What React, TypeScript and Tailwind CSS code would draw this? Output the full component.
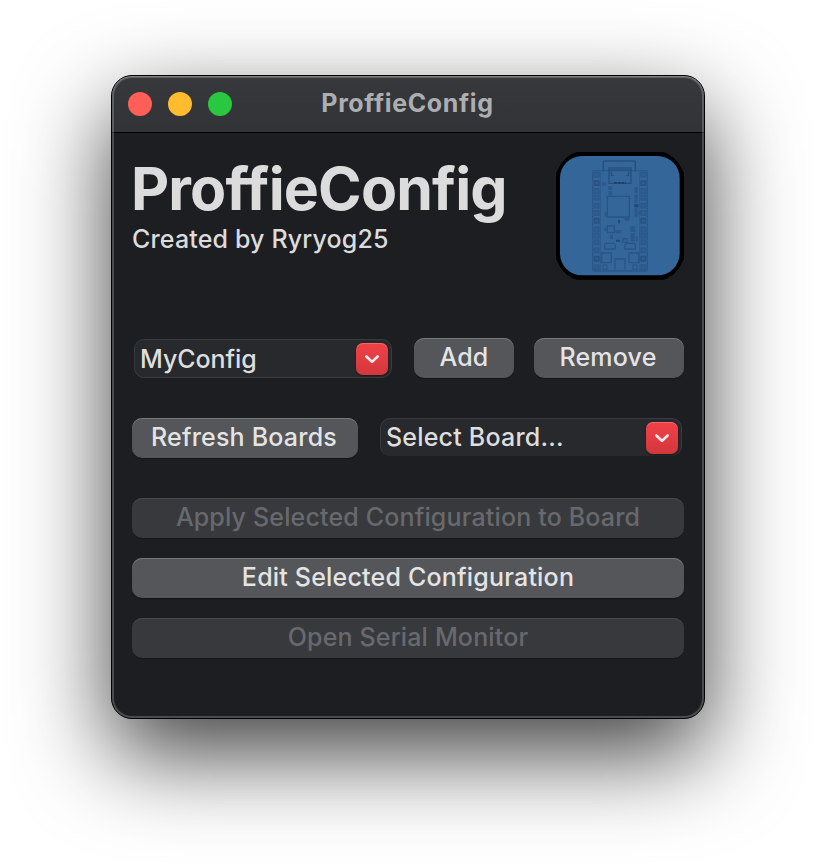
import type { ReactNode } from "react";

function PushButton({
  children,
  className = "",
  disabled = false,
}: {
  children: ReactNode;
  className?: string;
  disabled?: boolean;
}) {
  const tone = disabled
    ? "bg-[#38393d] text-[#68696d] tracking-[0.16px] shadow-[inset_0_1px_0_#47484c,0_1px_1px_rgba(0,0,0,0.25)]"
    : "bg-[#555659] text-[#e4e4e5] tracking-[0.2px] shadow-[inset_0_1px_0_#77787b,0_1px_1px_rgba(0,0,0,0.35)]";
  return (
    <button
      disabled={disabled}
      className={`flex h-10 items-center justify-center rounded-[10px] pb-0.5 text-[25px] leading-[38px] font-medium whitespace-nowrap ${tone} ${className}`}
    >
      {children}
    </button>
  );
}

function Combo({
  value,
  className = "",
}: {
  value: string;
  className?: string;
}) {
  return (
    <div
      className={`flex items-center justify-between rounded-[10px] border-[#3a3b3f] bg-[#28292d] pr-[3px] pl-[5px] text-[25px] font-[450] text-[#dedede] ${className}`}
    >
      <span>{value}</span>
      <span className="flex size-8 items-center justify-center rounded-[7px] bg-linear-to-b from-[#f24147] to-[#d2373c] shadow-[inset_0_1px_0_rgba(255,255,255,0.2),0_1px_2px_rgba(0,0,0,0.4)]">
        <svg width="16" height="10" viewBox="0 0 16 10" fill="none">
          <path d="M2.4 2.5 8 7.9 13.6 2.5" stroke="#fde9ea" strokeWidth="2.7" strokeLinecap="round" strokeLinejoin="round" />
        </svg>
      </span>
    </div>
  );
}

const pinRows = [104, 129, 153, 173, 197, 219, 242, 268, 287, 307, 331, 356, 382];

function BoardLogo() {
  return (
    <svg width="128" height="128" viewBox="48 36 384 384" fill="none">
      <path d="M110 36H370Q386 40 402 54Q418 68 426 88L432 100V356L426 368Q418 388 402 402Q386 415 370 419H110Q94 415 78 402Q62 388 54 368L48 356V100L54 88Q62 68 78 54Q94 40 110 36Z" fill="#000" />
      <rect x="60" y="48" width="359" height="358" rx="66" fill="#356699" />
      <g stroke="#2b588b" strokeWidth="4">
        <rect x="158" y="92" width="164" height="301" rx="4" />
        <path d="M181 96V390M299 96V390" strokeWidth="2.5" />
        {pinRows.map((y) => (
          <g key={y}>
            <rect x="163" y={y - 7} width="14" height="14" fill="#2f5d90" />
            <rect x="303" y={y - 7} width="14" height="14" fill="#2f5d90" />
          </g>
        ))}
        {[129, 242, 356].map((y) => (
          <g key={y} stroke="#285181">
            <rect x="164" y={y - 6} width="12" height="12" />
            <rect x="304" y={y - 6} width="12" height="12" />
          </g>
        ))}
        <rect x="189" y="375" width="12" height="13" />
        <rect x="279" y="375" width="12" height="13" />
      </g>
      <path d="M190 95V67Q190 63 194 63H282Q286 63 286 67V95" stroke="#264f7f" strokeWidth="4.5" />
      <g stroke="#275080" strokeWidth="4">
        <rect x="207" y="84" width="66" height="46" />
        <path d="M207 90H273M214 95V106H221M266 95V106H259" />
        <path d="M222 129H258" stroke="#1c416f" strokeWidth="6" strokeDasharray="9 2" />
      </g>
      <g stroke="#295485" strokeWidth="4">
        <path d="M202 169H268V231H202Z" />
        <path d="M202 258H223V278H202Z" />
        <path d="M194 314Q194 310 198 310H222L226 315V327H194ZM254 327V315L259 310H282L286 315V327Z" />
        <path d="M185 339H214V368H185ZM267 339H296V368H267ZM225 388V357H255V388" />
        <rect x="249" y="296" width="12" height="11" />
      </g>
      <g fill="#2b588b">
        <path d="M186 127H198V137H186ZM205 138H216V150H205ZM205 154H216V167H205ZM193 217H202V230H193ZM284 141H293V159H284ZM284 163H293V188H284ZM284 205H293V232H284ZM295 214H303V222H295ZM254 234H268V242H254ZM193 263H201V273H193ZM226 270H244V280H226ZM210 284H219V297H210ZM271 259H286V276H271ZM272 279H284V304H272ZM287 289H293V304H287Z" />
        <path d="M283 193H295V202H283ZM234 240H240V250H234ZM228 299H240V305H228Z" fill="#1f4675" />
      </g>
    </svg>
  );
}

export default function App() {
  return (
    <main className="flex h-[866px] w-[816px] justify-center overflow-hidden bg-white pt-[75px] font-['Inter','Liberation_Sans',sans-serif]">
      <section className="relative flex h-[644px] w-[594px] flex-col rounded-[21px] border border-black bg-[#1d1e22] shadow-[0_35px_92px_rgba(0,0,0,0.75)]">
        <header className="grid h-[57px] grid-cols-[1fr_auto_1fr] items-center rounded-t-[20px] border-b border-black bg-linear-to-b from-[#37383a] to-[#323337] px-4">
          <div className="flex gap-4">
            <span className="size-6 rounded-full bg-[#ff5f57]" />
            <span className="size-6 rounded-full bg-[#febc2e]" />
            <span className="size-6 rounded-full bg-[#28c840]" />
          </div>
          <h2 className="-ml-px pb-[3px] text-[25px] leading-[30px] font-bold tracking-[0.65px] text-[#adaeb2]">ProffieConfig</h2>
        </header>

        <div className="flex flex-1 flex-col px-5 pt-[19px]">
          <div className="flex h-32 justify-between">
            <div className="pt-[7px]">
              <h1 className="-ml-px text-[59px] leading-[60px] font-bold tracking-[-0.86px] text-[#dcdcdd]">ProffieConfig</h1>
              <p className="mt-[5px] text-[25px] leading-[30px] font-[450] tracking-[0.15px] text-[#dcdcdd]">Created by Ryryog25</p>
            </div>
            <BoardLogo />
          </div>

          <div className="mt-[58px] flex h-10 items-end">
            <Combo
              value="MyConfig"
              className="ml-0.5 h-[39px] w-[258px] border leading-[37px] tracking-[-0.05px] [&>span:first-child]:pt-px"
            />
            <PushButton className="ml-[22px] w-[100px]">Add</PushButton>
            <PushButton className="ml-5 w-[150px] pr-0.5">Remove</PushButton>
          </div>

          <div className="mt-10 flex h-10">
            <PushButton className="w-[226px] pr-0.5">Refresh Boards</PushButton>
            <Combo
              value="Select Board..."
              className="ml-[22px] h-[38px] w-[302px] border border-b-0 leading-[37px] tracking-[0.2px]"
            />
          </div>

          <div className="mt-10 flex flex-col gap-5">
            <PushButton disabled>Apply Selected Configuration to Board</PushButton>
            <PushButton>Edit Selected Configuration</PushButton>
            <PushButton disabled>Open Serial Monitor</PushButton>
          </div>
        </div>
        <div className="pointer-events-none absolute inset-0 rounded-[20px] shadow-[inset_0_0_0_2px_rgba(255,255,255,0.2),inset_0_1px_0_rgba(255,255,255,0.2)]" />
      </section>
    </main>
  );
}
